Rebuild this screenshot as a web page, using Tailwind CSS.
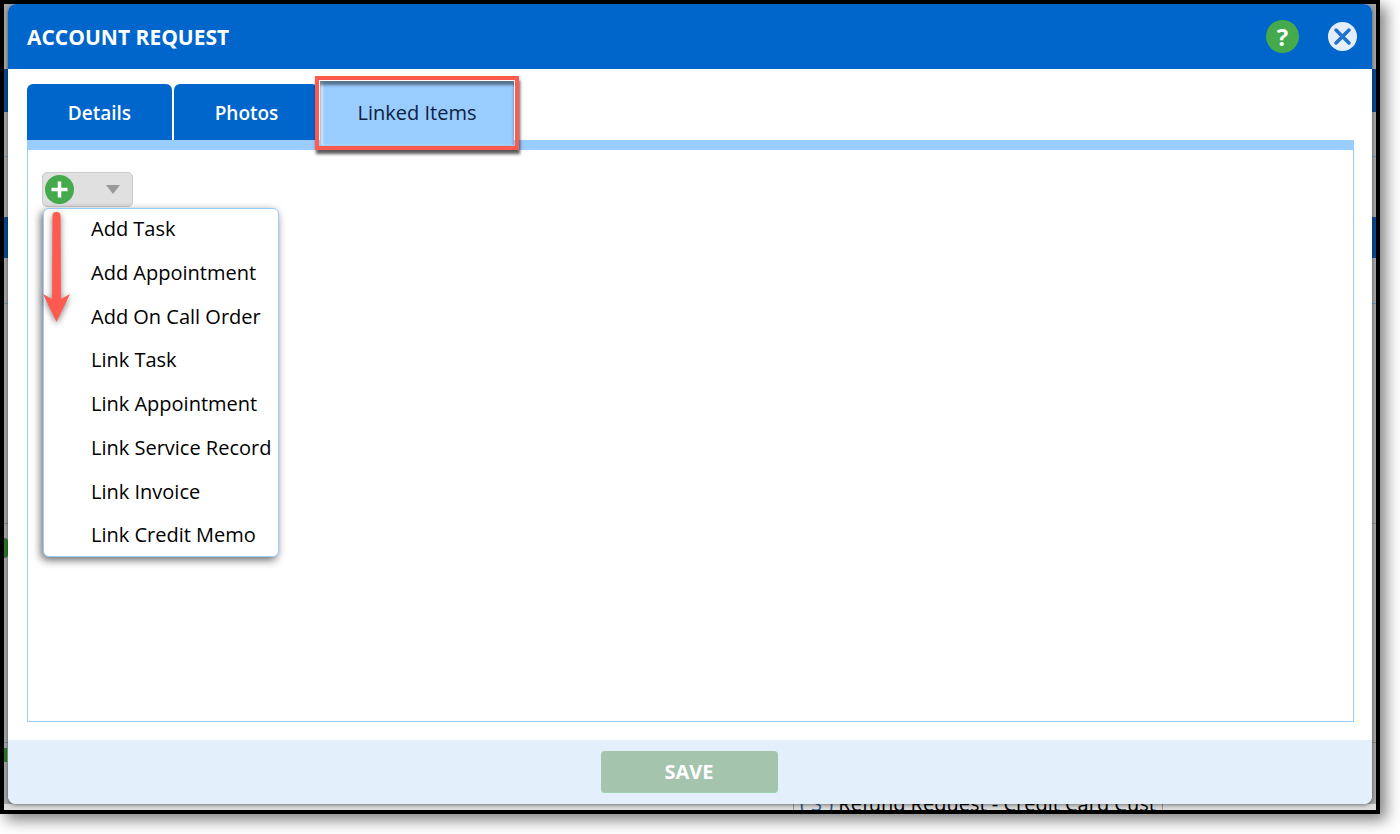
<!DOCTYPE html>
<html lang="en">
<head>
    <meta charset="UTF-8" />
    <title>Account Request</title>
    <script src="https://cdn.jsdelivr.net/npm/@tailwindcss/browser@4"></script>
</head>
<body class="bg-white h-[834px] w-[1400px] overflow-hidden font-['Open_Sans',sans-serif]">

    <!-- Screenshot frame -->
    <div class="relative w-[1380px] h-[814px] border-4 border-t-4 border-black bg-[#a6a6a6] shadow-[6px_6px_14px_rgba(0,0,0,0.5)] overflow-hidden flex flex-col">

        <!-- Page behind the modal, only its edges show -->
        <div class="absolute left-0 top-[65px] w-full h-[43px] bg-[#0a4a96]"></div>
        <div class="absolute left-0 top-[152px] w-full h-px bg-[#6f93bd]"></div>
        <div class="absolute left-0 top-[213px] w-full h-[41px] bg-[#0a4a96]"></div>
        <div class="absolute left-0 top-[299px] w-full h-px bg-[#6f93bd]"></div>
        <div class="absolute left-0 top-[519px] w-full h-px bg-[#888888]"></div>
        <div class="absolute left-0 top-[738px] w-full h-px bg-[#888888]"></div>
        <div class="absolute left-0 top-[534px] w-[4px] h-[20px] rounded-r-full bg-[#2a7a2a]"></div>
        <div class="absolute left-0 top-[744px] w-[3px] h-[14px] bg-[#2a7a2a]"></div>
        <div class="absolute left-0 top-[800px] w-full h-[6px] bg-[#dedede] overflow-hidden flex">
            <div class="ml-[789px] w-[370px] h-[6px] border-x border-[#999999] relative">
                <span class="absolute left-[6px] top-[-11px] text-[20px] leading-[22px] whitespace-nowrap text-black"><span class="text-[#2a5a8a]">( S )</span> Refund Request - Credit Card Cust</span>
            </div>
        </div>

        <!-- Modal -->
        <div class="relative z-10 ml-1 mr-1 h-[800px] w-[1364px] bg-white rounded-lg flex flex-col shadow-[0_1px_4px_rgba(0,0,0,0.5)]">

            <div class="h-[65px] shrink-0 bg-[#0066cc] rounded-t-lg flex items-center pl-[19px] pr-[15px] text-white">
                <h1 class="text-[21px] font-bold flex-1 mt-[2px]">ACCOUNT REQUEST</h1>
                <div class="w-[33px] h-[33px] rounded-full bg-[#44aa4c] flex items-center justify-center text-[24px] font-bold leading-none mr-[29px]">?</div>
                <svg class="w-[29px] h-[29px]" viewBox="0 0 29 29">
                    <circle cx="14.5" cy="14.5" r="14.5" fill="#e3eefa" />
                    <path d="M8 8 L21 21 M21 8 L8 21" stroke="#1f72cf" stroke-width="3.5" stroke-linecap="round" />
                </svg>
            </div>

            <div class="flex-1 flex flex-col pl-[19px] pr-[18px] pt-[15px] pb-[18px]">
                <!-- Tabs -->
                <div class="flex h-[56px] shrink-0 text-[19px]">
                    <div class="w-[145px] pt-[2px] rounded-t-md bg-[#0066cc] text-white font-semibold flex items-center justify-center">Details</div>
                    <div class="w-[144px] pt-[2px] pl-[1px] ml-[2px] bg-[#0066cc] rounded-t-md text-white font-semibold flex items-center justify-center">Photos</div>
                    <div class="relative w-[194px] ml-[2px] -mt-[3px] h-[64px] bg-[#99ccff] text-[#0d2240] text-[20px] flex items-center justify-center shadow-[inset_0_4px_3px_rgba(0,0,0,0.45),inset_3px_0_2px_rgba(255,255,255,0.6)] z-10">
                        Linked Items
                        <div class="absolute -inset-[5px] border-4 border-[#ff5a50] shadow-[1px_4px_3px_rgba(0,0,0,0.65)]"></div>
                    </div>
                </div>

                <!-- Content -->
                <div class="relative flex-1 border border-[#99ccff] border-t-[10px] px-[14px] pt-[22px]">
                    <div class="w-[91px] h-[35px] bg-[#e0e0e0] border border-[#cccccc] rounded-[5px] flex items-center justify-between pl-[2px] pr-[12px]">
                        <svg class="w-[29px] h-[29px]" viewBox="0 0 29 29">
                            <circle cx="14.5" cy="14.5" r="14.5" fill="#44aa4c" />
                            <path d="M14.5 6.5 V22.5 M6.5 14.5 H22.5" stroke="#ffffff" stroke-width="3.5" />
                        </svg>
                        <div class="w-0 h-0 border-x-[7px] border-x-transparent border-t-[9px] border-t-[#999999]"></div>
                    </div>

                    <!-- Dropdown -->
                    <ul class="absolute left-[15px] top-[58px] w-[236px] h-[349px] bg-white border border-[#99ccff] rounded-md shadow-[-2px_3px_8px_rgba(0,0,0,0.6)] pt-[9px] pl-[47px] flex flex-col gap-[21.75px] text-[20px] leading-[22px] text-black whitespace-nowrap z-20">
                        <li>Add Task</li>
                        <li>Add Appointment</li>
                        <li>Add On Call Order</li>
                        <li>Link Task</li>
                        <li>Link Appointment</li>
                        <li>Link Service Record</li>
                        <li>Link Invoice</li>
                        <li>Link Credit Memo</li>
                    </ul>

                    <!-- Annotation arrow -->
                    <svg class="absolute left-[14px] top-[62px] z-30 drop-shadow-[0_2px_3px_rgba(0,0,0,0.5)]" width="28" height="112" viewBox="0 0 28 112">
                        <path d="M10.5 4 a4 4 0 0 1 8 0 L19 87 L28 82 L14.5 110 L1 82 L10 87 Z" fill="#ff5a50" />
                    </svg>
                </div>
            </div>

            <div class="h-[64px] shrink-0 bg-[#e3f0fc] rounded-b-lg flex items-center justify-center pr-[2px]">
                <div class="w-[177px] h-[42px] bg-[#a4c4ae] rounded-[4px] border-b border-[#98d4a8] flex items-center justify-center text-white font-bold text-[20px]">SAVE</div>
            </div>
        </div>
    </div>
</body>
</html>
